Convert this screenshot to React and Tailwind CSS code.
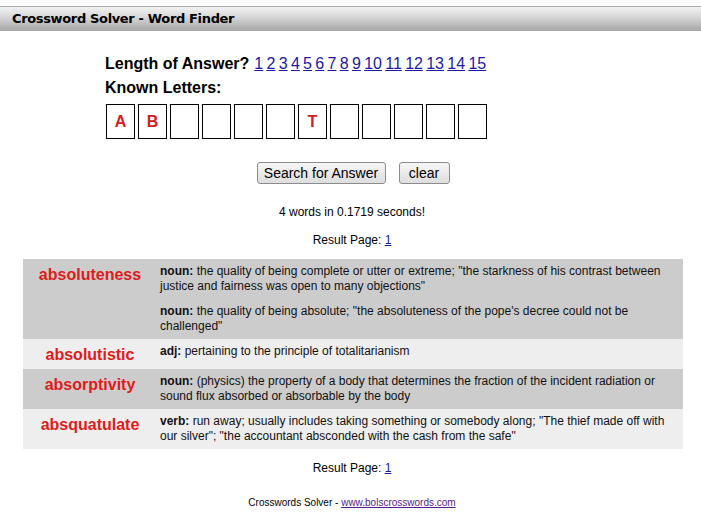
// Crossword Solver - Word Finder page

const letters = ['A', 'B', '', '', '', '', 'T', '', '', '', '', '']
const lengths = Array.from({ length: 15 }, (_, i) => i + 1)

const results = [
  {
    word: 'absoluteness',
    bg: 'bg-[#cccccc]',
    defs: [
      ['noun:', 'the quality of being complete or utter or extreme; "the starkness of his contrast between justice and fairness was open to many objections"'],
      ['noun:', 'the quality of being absolute; "the absoluteness of the pope\'s decree could not be challenged"'],
    ],
  },
  {
    word: 'absolutistic',
    bg: 'bg-[#eeeeee]',
    defs: [['adj:', 'pertaining to the principle of totalitarianism']],
  },
  {
    word: 'absorptivity',
    bg: 'bg-[#cccccc]',
    defs: [['noun:', '(physics) the property of a body that determines the fraction of the incident radiation or sound flux absorbed or absorbable by the body']],
  },
  {
    word: 'absquatulate',
    bg: 'bg-[#eeeeee]',
    defs: [['verb:', 'run away; usually includes taking something or somebody along; "The thief made off with our silver"; "the accountant absconded with the cash from the safe"']],
  },
]

export default function App() {
  return (
    <div className="w-[701px] h-[522px] bg-white text-black font-['Liberation_Sans',Arial,sans-serif] overflow-hidden">
      {/* title bar */}
      <div className="pt-[6px]">
        <div className="h-[25px] border-t border-b border-[#a8a8a8] bg-[linear-gradient(to_bottom,#f2f2f2,#d6d6d6_45%,#a9a9a9)] flex items-center pl-[12px]">
          <span className="font-['DejaVu_Sans',Verdana,sans-serif] font-bold text-[13px] tracking-[-0.35px] text-black">Crossword Solver - Word Finder</span>
        </div>
      </div>

      {/* search form */}
      <div className="pl-[105px] pt-[23px]">
        <div className="text-[16px] leading-[19px] flex items-baseline">
          <span className="font-bold mr-[5px]">Length of Answer?</span>
          {lengths.map(n => (
            <a key={n} href="#" className="text-[#1a1aa6] underline mr-[3.3px]">{n}</a>
          ))}
        </div>
        <div className="text-[16px] leading-[19px] font-bold mt-[5px]">Known Letters:</div>
        <div className="flex gap-[3px] mt-[7px] pl-[1px]">
          {letters.map((l, i) => (
            <div key={i} className="w-[29px] h-[35px] border border-black flex items-center justify-center text-[#d42020] font-bold text-[16px]">
              {l}
            </div>
          ))}
        </div>
      </div>

      <div className="flex justify-center gap-[13px] mt-[23px] pl-[5px]">
        <button className="h-[22px] w-[129px] text-[14px] rounded-[3px] border border-[#8c8c8c] bg-[linear-gradient(to_bottom,#f6f6f6,#dedede)]">Search for Answer</button>
        <button className="h-[22px] w-[51px] text-[14px] rounded-[3px] border border-[#8c8c8c] bg-[linear-gradient(to_bottom,#f6f6f6,#dedede)]">clear</button>
      </div>

      <p className="text-center text-[12px] mt-[19px] pl-[3px]">4 words in 0.1719 seconds!</p>
      <p className="text-center text-[12px] mt-[10px] pl-[3px]">Result Page: <a href="#" className="text-[#1a1aa6] underline">1</a></p>

      {/* results */}
      <div className="mx-[23px] w-[660px] mt-[10px]">
        {results.map(r => (
          <div key={r.word} className={`flex ${r.bg} py-[5px]`}>
            <div className="w-[134px] shrink-0 text-center text-[#e01b1b] font-bold text-[16px] leading-[19px] pt-[1px]">{r.word}</div>
            <div className="flex-1 pl-[3px] pr-[18px] flex flex-col gap-[10px]">
              {r.defs.map((d, i) => (
                <p key={i} className="text-[12px] leading-[15px] text-[#111]">
                  <b>{d[0]}</b> {d[1]}
                </p>
              ))}
            </div>
          </div>
        ))}
      </div>

      <p className="text-center text-[12px] mt-[10px] pl-[3px]">Result Page: <a href="#" className="text-[#1a1aa6] underline">1</a></p>
      <p className="text-center text-[10px] mt-[18px] pl-[3px]">Crosswords Solver - <a href="#" className="text-[#551a8b] underline">www.bolscrosswords.com</a></p>
    </div>
  )
}
